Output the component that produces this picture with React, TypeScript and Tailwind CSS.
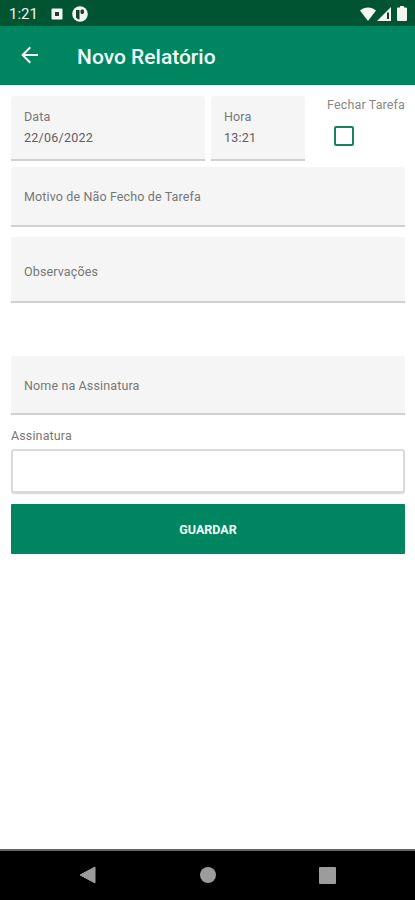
import type { ReactNode } from "react";

function Field({
  label,
  value,
  className,
}: {
  label: string;
  value?: string;
  className: string;
}) {
  return (
    <div
      className={`flex flex-col justify-center rounded-t-[3px] border-b-2 border-[#d0d0d0] bg-[#f5f5f5] pl-[13px] text-[12.5px] leading-[21px] tracking-[0.13px] text-[#777777] ${className}`}
    >
      <span>{label}</span>
      {value && <span className="tracking-[0.25px] text-[#606060]">{value}</span>}
    </div>
  );
}

function StatusBar() {
  return (
    <div className="flex h-[26px] items-center bg-[#005432] pr-[8px] pl-[9px] text-[#f2f7f0]">
      <span className="w-[42px] pt-[2px] text-[15px] leading-none">1:21</span>
      <svg width="12" height="12" viewBox="0 0 12 12" className="mt-[1px]">
        <rect x="0.5" y="0.5" width="11" height="11" rx="1" fill="currentColor" />
        <path d="M4 4h4v4H4z" fill="#26392f" />
      </svg>
      <svg width="16" height="16" viewBox="0 0 16 16" className="mt-[1px] ml-[9px]">
        <circle cx="8" cy="8" r="7.8" fill="currentColor" />
        <path d="M4 4h3.500v9.500A5 5 0 0 1 4 11.500z" fill="#1d3f2e" />
        <rect x="8.5" y="3.5" width="3.5" height="4.5" rx="1.4" fill="#1d3f2e" />
      </svg>
      <svg width="16" height="14" viewBox="0 0 16 14" className="mt-[1px] ml-auto">
        <path d="M8 14 0 3.600C4.500-.4 11.500-.4 16 3.600z" fill="currentColor" />
      </svg>
      <svg width="14" height="14" viewBox="0 0 14 14" className="mt-[1px] ml-[1px]">
        <path d="M14 0v14H0z" fill="currentColor" />
        <path d="M10 5.500h2V12h-2z" fill="#123d29" />
      </svg>
      <svg width="10" height="15" viewBox="0 0 10 15" className="ml-[6px]">
        <path
          d="M3 0h4v1.600h2a1 1 0 0 1 1 1V14a1 1 0 0 1-1 1H1a1 1 0 0 1-1-1V2.600a1 1 0 0 1 1-1h2z"
          fill="currentColor"
        />
      </svg>
    </div>
  );
}

function AppBar({ children }: { children: ReactNode }) {
  return (
    <header className="flex h-[59px] items-center border-b border-[#087a54] bg-[#008561] pl-[21px] text-[#f4fbf8]">
      <svg
        width="18"
        height="18"
        viewBox="0 0 18 18"
        fill="none"
        stroke="currentColor"
        strokeWidth="2"
      >
        <path d="M17 9H2M9.300 1.300 1.600 9l7.700 7.700" />
      </svg>
      <h1 className="ml-[38px] pt-[4px] text-[21px] font-medium leading-none">{children}</h1>
    </header>
  );
}

function NavBar() {
  return (
    <nav className="mt-auto flex h-[51px] items-center justify-between border-t-2 border-[#666666] bg-black pr-[79px] pb-px pl-[79px] text-[#9c9c9c]">
      <svg width="17" height="18" viewBox="0 0 17 18">
        <path d="M16 1v16L1 9z" fill="currentColor" stroke="currentColor" strokeLinejoin="round" />
      </svg>
      <span className="size-[16px] rounded-full bg-[#9c9c9c]" />
      <span className="size-[17px] rounded-[1px] bg-[#9c9c9c]" />
    </nav>
  );
}

export default function App() {
  return (
    <div className="flex h-[900px] w-[415px] flex-col bg-white font-[Roboto,sans-serif]">
      <StatusBar />
      <AppBar>Novo Relatório</AppBar>

      <main className="flex flex-col pt-[11px] pr-[10px] pl-[11px]">
        <div className="flex">
          <Field label="Data" value="22/06/2022" className="h-[65px] w-[194px] pb-px" />
          <Field label="Hora" value="13:21" className="ml-[6px] h-[65px] w-[94px] pb-px" />
          <div className="ml-auto flex flex-col">
            <span className="text-[12.5px] leading-[18px] tracking-[0.13px] whitespace-nowrap text-[#888888]">
              Fechar Tarefa
            </span>
            <span className="mt-[12px] ml-[7px] size-[20px] rounded-[2px] border-2 border-[#1d8060]" />
          </div>
        </div>

        <Field label="Motivo de Não Fecho de Tarefa" className="mt-[6px] h-[60px]" />
        <Field label="Observações" className="mt-[10px] h-[66px] pt-[5px]" />
        <Field label="Nome na Assinatura" className="mt-[53px] h-[59px] pt-px" />

        <span className="mt-[11px] text-[12.5px] leading-[20px] tracking-[0.13px] text-[#777777]">
          Assinatura
        </span>
        <div className="mt-[3px] h-[44px] rounded-[3px] border-2 border-[#dadada] bg-white shadow-[0_1px_1px_#d8d8d8]" />
        <button
          type="button"
          className="mt-[11px] h-[50px] rounded-[1px] bg-[#008561] pt-[2px] text-[12.5px] font-bold text-[#f4fbf8]"
        >
          GUARDAR
        </button>
      </main>

      <NavBar />
    </div>
  );
}
